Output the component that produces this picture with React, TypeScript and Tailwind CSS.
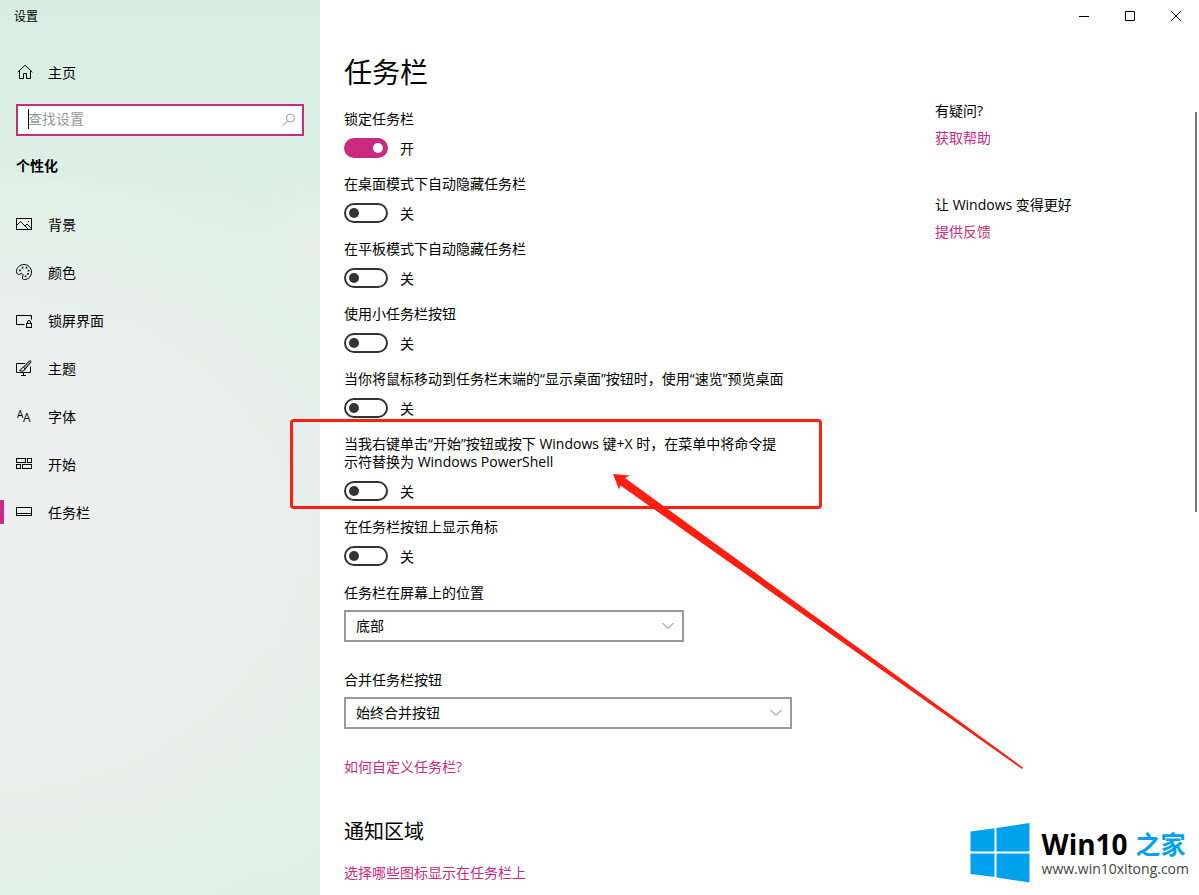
/**
 * Taskbar settings page: category sidebar, the list of taskbar options,
 * a help column and a callout over the PowerShell option.
 */

import { useState } from 'react'
import type { ReactNode } from 'react'

interface NavItem {
  label: string
  icon: ReactNode
}

interface ToggleOption {
  id: string
  label: string
  on?: boolean
  callout?: boolean
}

const NAV: NavItem[] = [
  {
    label: '背景',
    icon: (
      <>
        <rect x="0.5" y="2.5" width="15" height="11" />
        <path d="M0.5 9.5 4.5 5.5 12 13M9 10l2-2 4.5 4.5" />
        <path d="M12 5.5h1" />
      </>
    ),
  },
  {
    label: '颜色',
    icon: (
      <>
        <path d="M8 .5c4.200 0 7.500 3.300 7.500 7.500S12.500 15.500 8.500 15.500c-1.800 0-2.500-1-2-2.500.5-1.300.9-2.200.1-3-.9-.9-1.800-.2-3 .3C1.800 11 .5 9.600.5 7.600.5 3.500 3.900.5 8 .5z" />
        <path strokeWidth="1.600" d="M3.200 6.400h1.600M5.700 3.600h1.600M9.700 3.600h1.600M11.700 6.700h1.600M11.200 9.900h1.600M8.700 12.300h1.600" />
      </>
    ),
  },
  {
    label: '锁屏界面',
    icon: (
      <>
        <path d="M8.500 12.500h-8v-9h15v4" />
        <rect x="10.5" y="11.5" width="5" height="4" />
        <path d="M11.500 11.500v-1.500a1.500 1.500 0 0 1 3 0v1.500" />
      </>
    ),
  },
  {
    label: '主题',
    icon: (
      <>
        <path d="M9 3.500H0.500v9h14v-6M5 15.500h5M7.500 12.500v3" />
        <path fill="#999" d="M14.500.8c.8.500.6 1.200.1 1.800L9.200 9 7.300 7.300 12.800 1.500c.5-.6 1.100-1 1.700-.7z" />
        <path d="M7.300 7.500C5 7.800 5.800 10 3.500 10.500 5.500 11.800 9 11 9 9" />
      </>
    ),
  },
  {
    label: '字体',
    icon: (
      <g fill="currentColor" stroke="none" fontFamily="Open Sans, sans-serif">
        <text x="1" y="9.500" fontSize="10">A</text>
        <text x="7" y="13.500" fontSize="12">A</text>
      </g>
    ),
  },
  {
    label: '开始',
    icon: (
      <>
        <rect x="0.5" y="2.5" width="9" height="4" />
        <rect x="11.5" y="2.5" width="4" height="4" />
        <rect x="0.5" y="8.5" width="4" height="4" />
        <rect x="6.5" y="8.5" width="9" height="4" />
      </>
    ),
  },
  {
    label: '任务栏',
    icon: (
      <>
        <rect x="0.5" y="3.5" width="15" height="8" />
        <path d="M0.500 9.500h15" />
      </>
    ),
  },
]

const OPTIONS: ToggleOption[] = [
  { id: 'lock',       label: '锁定任务栏', on: true },
  { id: 'desktop',    label: '在桌面模式下自动隐藏任务栏' },
  { id: 'tablet',     label: '在平板模式下自动隐藏任务栏' },
  { id: 'small',      label: '使用小任务栏按钮' },
  { id: 'peek',       label: '当你将鼠标移动到任务栏末端的“显示桌面”按钮时，使用“速览”预览桌面' },
  { id: 'powershell', label: '当我右键单击“开始”按钮或按下 Windows 键+X 时，在菜单中将命令提示符替换为 Windows PowerShell', callout: true },
  { id: 'badges',     label: '在任务栏按钮上显示角标' },
]

function Icon({ children }: { children: ReactNode }) {
  return (
    <svg viewBox="0 0 16 16" fill="none" stroke="currentColor" className="size-4 flex-none overflow-visible" aria-hidden="true">
      {children}
    </svg>
  )
}

/** Red frame round an option, with an arrow coming in from the lower right */
function Callout() {
  return (
    <div className="pointer-events-none absolute -top-4 -left-[54px] z-10 h-[90px] w-[532px] rounded-[4px] border-3 border-[#ff1e10]">
      <svg viewBox="0 0 411 296" fill="#ff1e10" className="absolute top-[52px] left-80 h-[296px] w-[411px]" aria-hidden="true">
        <path d="M0 0 17 1.500 12 4 410 293.500 409 295 7.500 11.500 6 15.500z" />
      </svg>
    </div>
  )
}

function Toggle({ option }: { option: ToggleOption }) {
  const [on, setOn] = useState(option.on ?? false)

  return (
    <div className="relative flex flex-col gap-2.5">
      <label htmlFor={option.id} className="max-w-[442px]">{option.label}</label>
      <div className="flex h-5 items-center gap-3">
        <input
          id={option.id}
          type="checkbox"
          role="switch"
          checked={on}
          onChange={(e) => setOn(e.target.checked)}
          className="relative h-5 w-11 flex-none appearance-none rounded-full border-2 border-[#333] before:absolute before:top-[3px] before:left-[3px] before:size-2.5 before:rounded-full before:bg-[#333] checked:border-[#cc2a80] checked:bg-[#cc2a80] checked:before:left-[27px] checked:before:bg-white"
        />
        <span className="pt-0.5">{on ? '开' : '关'}</span>
      </div>
      {option.callout && <Callout />}
    </div>
  )
}

function SelectField({ id, label, value, wide }: { id: string; label: string; value: string; wide?: boolean }) {
  return (
    <div className="flex flex-col gap-2">
      <label htmlFor={id}>{label}</label>
      <div className={wide ? 'relative w-full' : 'relative w-[340px]'}>
        <select id={id} className="h-8 w-full appearance-none border-2 border-[#999] bg-white pl-2.5">
          <option>{value}</option>
        </select>
        <svg viewBox="0 0 12 8" fill="none" stroke="#777" className="pointer-events-none absolute top-3 right-2.5 h-2 w-3" aria-hidden="true">
          <path d="M0.500 1 6 6.500 11.500 1" />
        </svg>
      </div>
    </div>
  )
}

function Sidebar() {
  return (
    <aside className="w-80 flex-none bg-[radial-gradient(ellipse_25%_10%_at_100%_28%,#e5efe3_0%,transparent_100%),radial-gradient(ellipse_150%_48%_at_0%_60%,#eeefef_0%,#eaefed_45%,transparent_100%),linear-gradient(to_bottom,#d8eee4_0%,#dcefe6_30%,#e3efea_60%,#deefe6_100%)]">
      <div className="flex h-8 items-center pt-0.5 pl-3.5 text-xs">设置</div>

      <a href="#home" className="mt-4 flex h-12 items-center gap-4 pl-4">
        <Icon>
          <path d="M1.700 8.200 9 1.200 16.300 8.200M3.500 6.800v7.700h4V9.500h3v5h4V6.800" />
        </Icon>
        <span className="pt-0.5">主页</span>
      </a>

      <div className="relative mx-4 mt-2">
        <input
          type="text"
          aria-label="查找设置"
          placeholder="查找设置"
          className="block h-8 w-full border-2 border-[#cc2a80] bg-white pr-8 pb-1 pl-2.5 outline-none placeholder:text-[#999]"
        />
        <span className="absolute top-[5px] left-3 h-5 w-px bg-black" />
        <svg viewBox="0 0 14 14" fill="none" stroke="#999" className="absolute top-[9px] right-2 size-3.5" aria-hidden="true">
          <circle cx="8.5" cy="5" r="4" />
          <path d="M5.500 8 1 12.700" />
        </svg>
      </div>

      <h2 className="mt-4 pl-4 leading-7 font-bold">个性化</h2>

      <nav className="mt-5">
        {NAV.map(({ label, icon }) => (
          <a key={label} href={`#${label}`} className="relative flex h-12 items-center gap-4 pl-4">
            {label === '任务栏' && <span className="absolute left-0 h-6 w-1 bg-[#cc2a80]" />}
            <Icon>{icon}</Icon>
            <span className="pt-0.5">{label}</span>
          </a>
        ))}
      </nav>
    </aside>
  )
}

function WindowButtons() {
  return (
    <div className="flex h-8 justify-end">
      {[
        { name: '最小化', d: 'M0 5.500h10' },
        { name: '最大化', d: 'M0.500 0.500h9v9h-9z' },
        { name: '关闭',   d: 'M0 0 10 10M10 0 0 10' },
      ].map(({ name, d }) => (
        <button key={name} aria-label={name} className="grid w-[46px] place-items-center">
          <svg viewBox="0 0 10 10" fill="none" stroke="black" className="size-2.5" aria-hidden="true">
            <path d={d} />
          </svg>
        </button>
      ))}
    </div>
  )
}

function HelpBlock({ title, link }: { title: string; link: string }) {
  return (
    <div className="flex flex-col gap-[9px]">
      <h3>{title}</h3>
      <a href="#help" className="text-[#cc2a80]">{link}</a>
    </div>
  )
}

function SiteMark() {
  return (
    <div className="absolute right-2.5 bottom-3 flex items-center gap-3">
      <svg viewBox="0 0 60 60" fill="#00a2ed" className="size-15" aria-hidden="true">
        <path d="M0.500 8.500 24.500 5.200V28.500H0.500zM26.500 5 59.500 0V28.500H26.500zM0.500 30.500H24.500V54L0.500 51zM26.500 30.500H59.500V59.500L26.500 54.500z" />
      </svg>
      <div className="flex flex-col">
        <div className="flex gap-2 text-[28px] leading-8 font-bold whitespace-nowrap">
          Win10
          <span className="text-[25px] leading-8 text-[#00a2ed]">之家</span>
        </div>
        <span className="leading-[18px] text-[#444]">www.win10xitong.com</span>
      </div>
    </div>
  )
}

export default function App() {
  return (
    <div className="flex min-h-screen overflow-hidden bg-white font-['Open_Sans','Noto_Sans_CJK_SC',sans-serif] text-sm leading-[18px] text-black">
      <Sidebar />

      <main className="relative min-w-0 flex-1">
        <WindowButtons />

        <div className="flex pl-6">
          <div className="flex-1 pt-[22px] pb-3">
            <h1 className="text-[28px] leading-9">任务栏</h1>

            <div className="mt-5 flex max-w-[448px] flex-col gap-[17px]">
              {OPTIONS.map((option) => (
                <Toggle key={option.id} option={option} />
              ))}
            </div>

            <div className="mt-[18px] flex max-w-[448px] flex-col gap-[29px]">
              <SelectField id="position" label="任务栏在屏幕上的位置" value="底部" />
              <SelectField id="combine" label="合并任务栏按钮" value="始终合并按钮" wide />
              <a href="#customize" className="text-[#cc2a80]">如何自定义任务栏?</a>
            </div>

            <h2 className="mt-10 text-xl leading-8">通知区域</h2>
            <a href="#icons" className="mt-4 block text-[#cc2a80]">选择哪些图标显示在任务栏上</a>
          </div>

          {/* Help column */}
          <div className="flex w-66 flex-none flex-col gap-[49px] pt-[70px]">
            <HelpBlock title="有疑问?" link="获取帮助" />
            <HelpBlock title="让 Windows 变得更好" link="提供反馈" />
          </div>
        </div>

        {/* Scroll thumb */}
        <div className="absolute top-28 right-0.5 h-100 w-0.5 bg-[#7a7a7a]" />

        <SiteMark />
      </main>
    </div>
  )
}
